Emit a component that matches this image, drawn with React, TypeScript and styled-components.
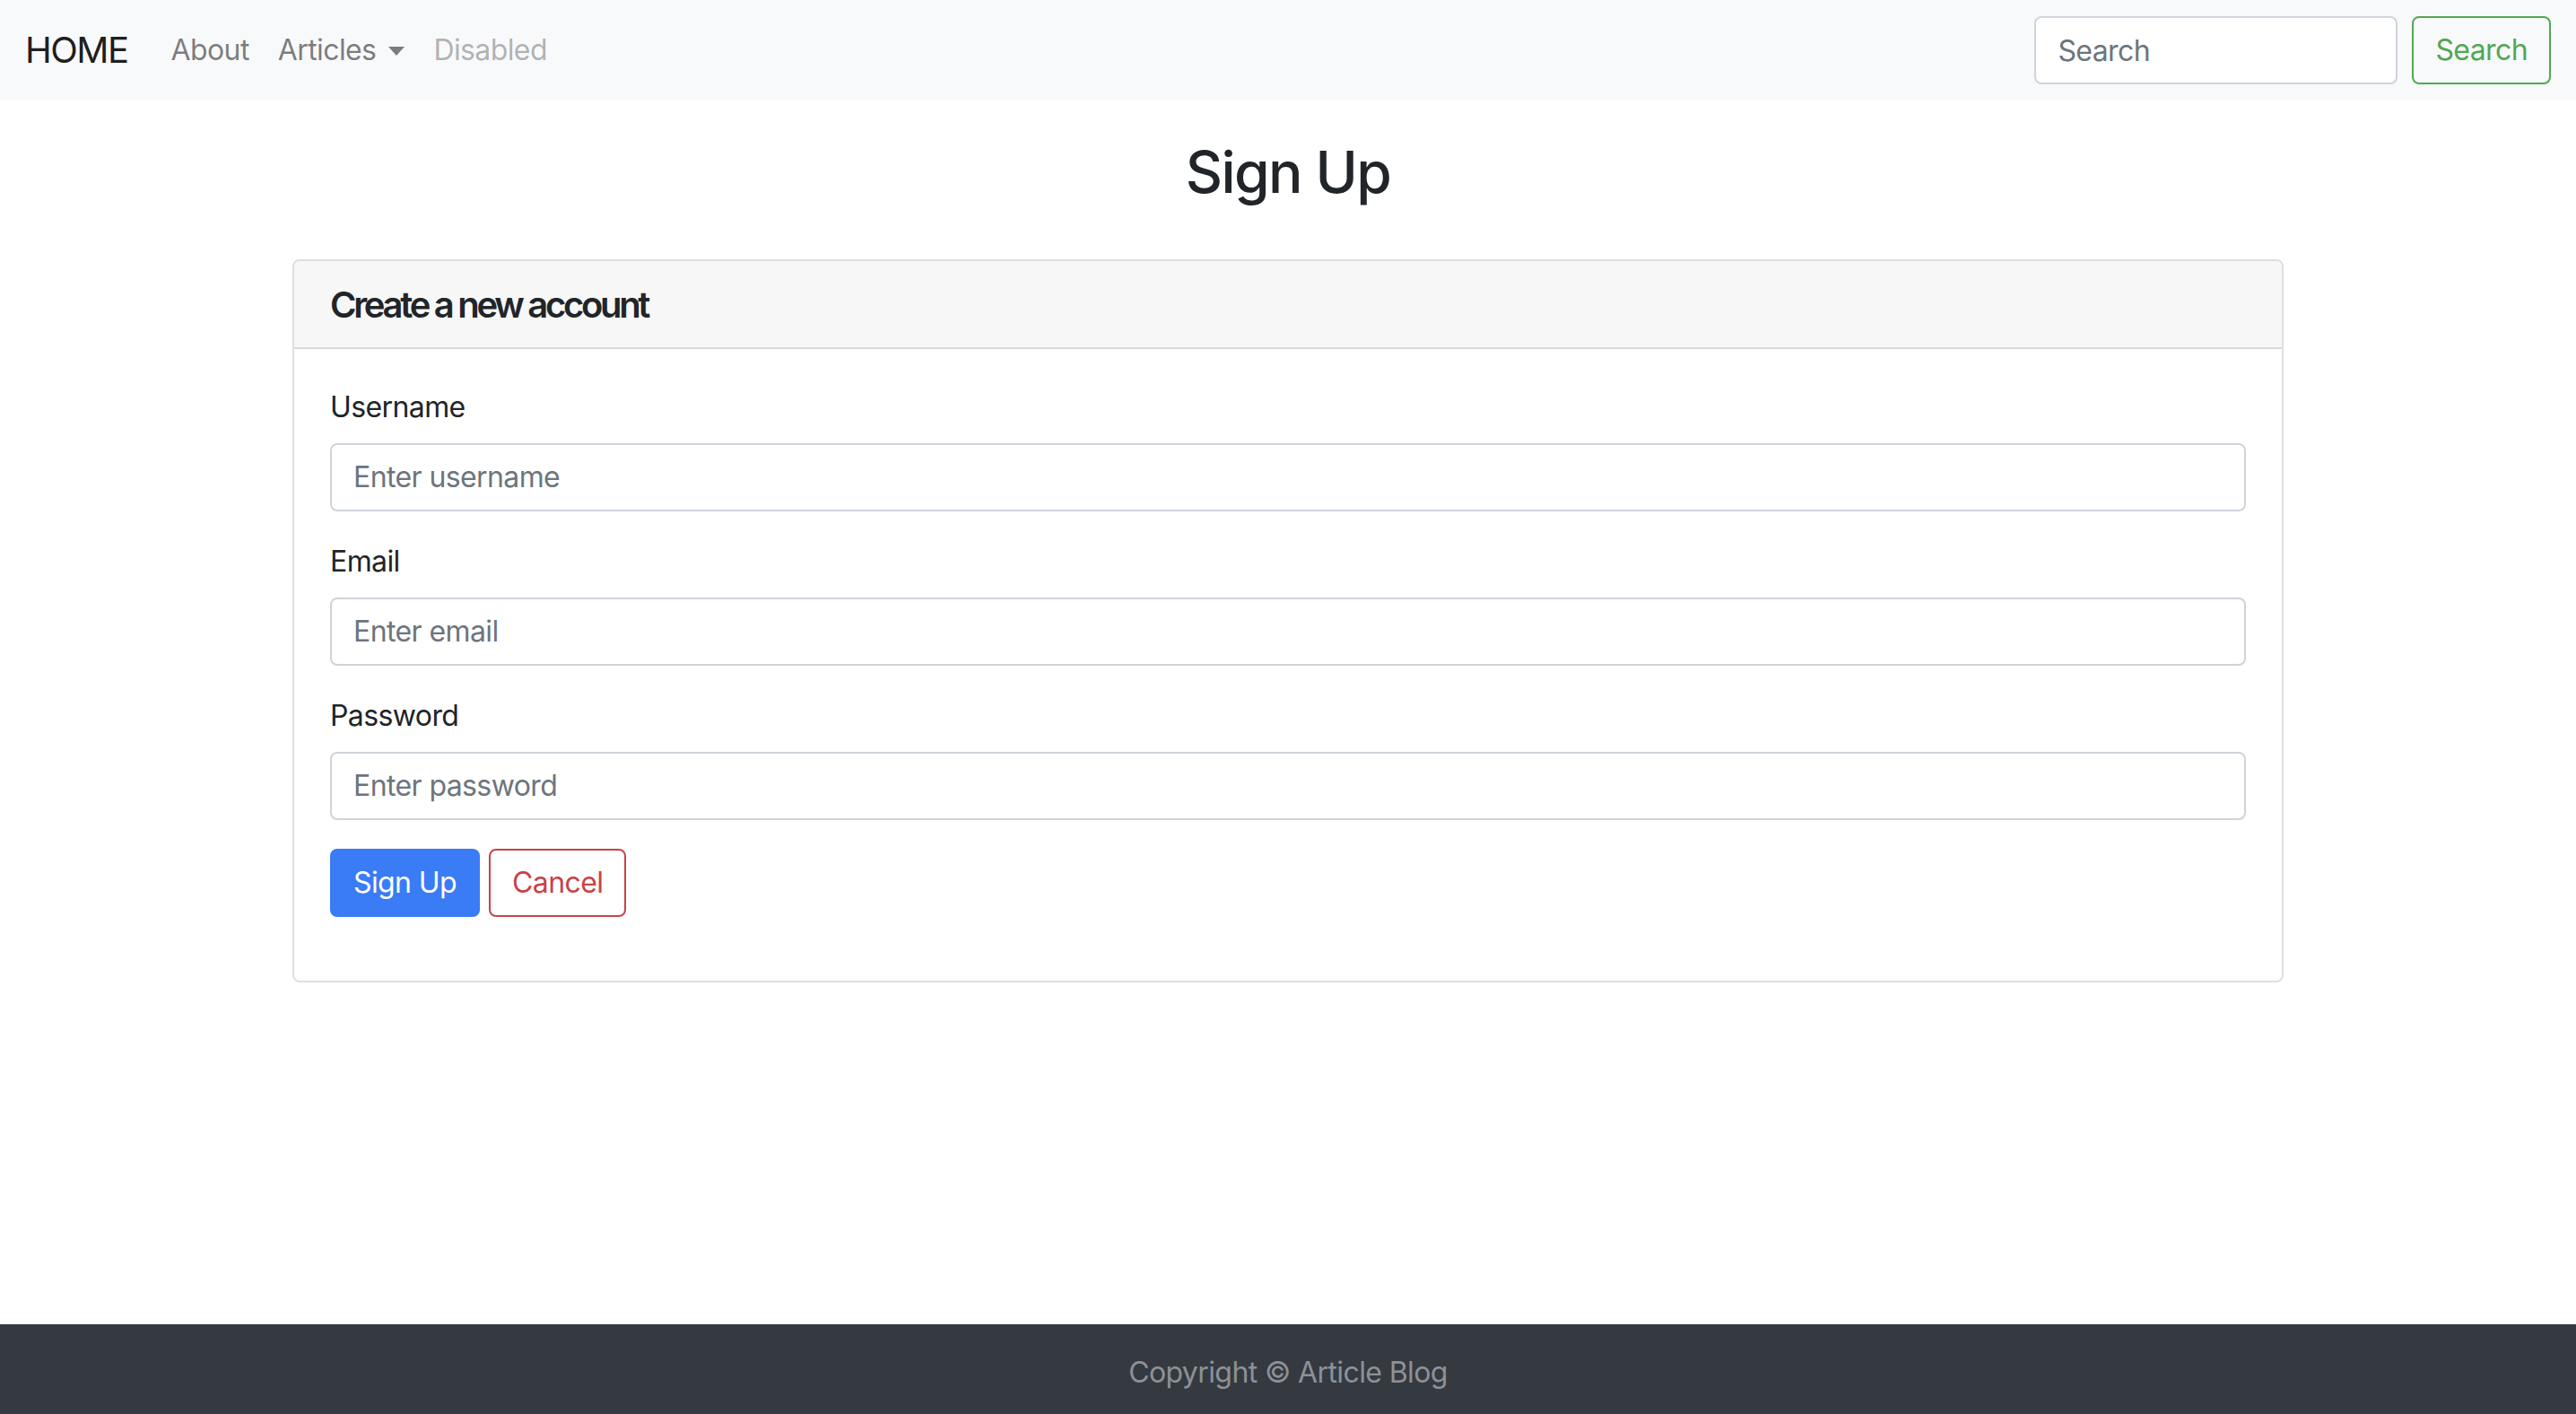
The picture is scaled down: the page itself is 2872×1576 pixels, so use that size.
import React from "react";
import styled, { createGlobalStyle } from "styled-components";

const GlobalStyle = createGlobalStyle`
  * {
    box-sizing: border-box;
  }
  body {
    margin: 0;
    font-family: Inter, "Noto Sans", "Liberation Sans", sans-serif;
    letter-spacing: -0.6px;
    color: #212529;
    background: #ffffff;
  }
`;

const App = () => {
  return (
    <Page>
      <GlobalStyle />
      <Navbar>
        <NavLeft>
          <Brand>HOME</Brand>
          <NavLink>About</NavLink>
          <NavLink>
            Articles
            <Caret />
          </NavLink>
          <NavLink disabled>Disabled</NavLink>
        </NavLeft>
        <SearchForm>
          <SearchInput placeholder="Search" />
          <OutlineButton tone="#52a752">Search</OutlineButton>
        </SearchForm>
      </Navbar>

      <Main>
        <Title>Sign Up</Title>
        <Card>
          <CardHeader>
            <CardTitle>Create a new account</CardTitle>
          </CardHeader>
          <CardBody>
            <FormGroup>
              <Label>Username</Label>
              <Input placeholder="Enter username" />
            </FormGroup>
            <FormGroup>
              <Label>Email</Label>
              <Input placeholder="Enter email" />
            </FormGroup>
            <FormGroup>
              <Label>Password</Label>
              <Input type="password" placeholder="Enter password" />
            </FormGroup>
            <ButtonRow>
              <PrimaryButton>Sign Up</PrimaryButton>
              <OutlineButton tone="#c9424a">Cancel</OutlineButton>
            </ButtonRow>
          </CardBody>
        </Card>
      </Main>

      <Footer>Copyright © Article Blog</Footer>
    </Page>
  );
};

export default App;

const Page = styled.div`
  min-height: 100vh;
  display: flex;
  flex-direction: column;
`;

const Navbar = styled.nav`
  height: 112px;
  padding: 16px 28px 16px 28px;
  display: flex;
  justify-content: space-between;
  align-items: center;
  background-color: #f8f9fa;
`;

const NavLeft = styled.div`
  display: flex;
  align-items: center;
`;

const Brand = styled.a`
  font-size: 40px;
  line-height: 60px;
  padding: 10px 0;
  margin-right: 32px;
  color: rgba(0, 0, 0, 0.9);
  letter-spacing: -1.5px;
`;

const NavLink = styled.a<{ disabled?: boolean }>`
  display: flex;
  align-items: center;
  padding: 16px;
  font-size: 32px;
  line-height: 48px;
  color: ${(p) => (p.disabled ? "rgba(0, 0, 0, 0.3)" : "rgba(0, 0, 0, 0.5)")};
`;

const Caret = styled.span`
  display: inline-block;
  margin-left: 14px;
  margin-top: 2px;
  border-top: 10px solid rgba(0, 0, 0, 0.5);
  border-left: 9px solid transparent;
  border-right: 9px solid transparent;
`;

const SearchForm = styled.form`
  display: flex;
  align-items: center;
  gap: 16px;
`;

const SearchInput = styled.input`
  width: 405px;
  height: 76px;
  padding: 12px 24px;
  font-family: inherit;
  font-size: 32px;
  letter-spacing: inherit;
  color: #495057;
  background: #ffffff;
  border: 2px solid #ced4da;
  border-radius: 8px;
  outline: none;

  &::placeholder {
    color: #6c757d;
  }
`;

const BaseButton = styled.button`
  height: 76px;
  padding: 12px 24px;
  font-family: inherit;
  font-size: 32px;
  line-height: 48px;
  letter-spacing: inherit;
  border-radius: 8px;
  border: 2px solid transparent;
  cursor: pointer;
`;

const OutlineButton = styled(BaseButton)<{ tone: string }>`
  color: ${(p) => p.tone};
  background: transparent;
  border-color: ${(p) => p.tone};
`;

const PrimaryButton = styled(BaseButton)`
  color: #ffffff;
  background: #3a7bf6;
  border-color: #3a7bf6;
`;

const Main = styled.main`
  flex: 1;
  padding-bottom: 40px;
`;

const Title = styled.h2`
  margin: 42px 0 58px;
  font-size: 64px;
  font-weight: 500;
  line-height: 1.2;
  text-align: center;
  letter-spacing: -1.6px;
`;

const Card = styled.div`
  width: 2220px;
  margin: 0 auto;
  border: 2px solid rgba(0, 0, 0, 0.125);
  border-radius: 8px;
  overflow: hidden;
`;

const CardHeader = styled.div`
  padding: 25px 40px 23px;
  background-color: #f7f7f7;
  border-bottom: 2px solid rgba(0, 0, 0, 0.125);
`;

const CardTitle = styled.h5`
  margin: 0;
  font-size: 40px;
  font-weight: 600;
  line-height: 48px;
  letter-spacing: -3.3px;
`;

const CardBody = styled.div`
  padding: 41px 40px 39px;
`;

const FormGroup = styled.div`
  margin-bottom: 32px;
`;

const Label = styled.label`
  display: block;
  margin-bottom: 16px;
  font-size: 32px;
  line-height: 48px;
`;

const Input = styled.input`
  display: block;
  width: 100%;
  height: 76px;
  padding: 12px 24px;
  font-family: inherit;
  font-size: 32px;
  letter-spacing: inherit;
  color: #495057;
  border: 2px solid #ced4da;
  border-radius: 8px;
  outline: none;

  &::placeholder {
    color: #6c757d;
  }
`;

const ButtonRow = styled.div`
  display: flex;
  gap: 10px;
  margin-bottom: 32px;
`;

const Footer = styled.footer`
  height: 100px;
  padding: 30px 26px 22px;
  background-color: #343a40;
  color: #8d9196;
  font-size: 32px;
  line-height: 48px;
  text-align: center;
`;
